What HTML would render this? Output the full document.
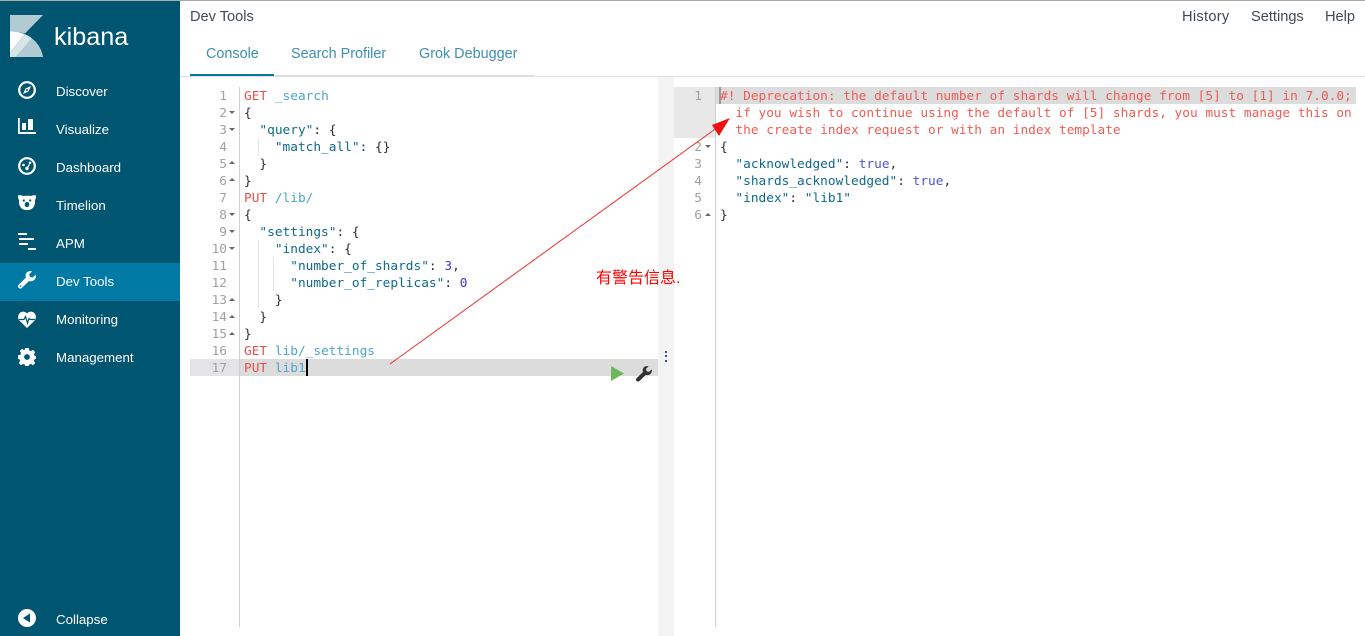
<!DOCTYPE html>
<html><head><meta charset="utf-8"><style>
*{box-sizing:border-box}
html,body{margin:0;padding:0;width:1365px;height:636px;overflow:hidden;background:#fff}
body{position:relative;font-family:"Liberation Sans",sans-serif}
.a{position:absolute;white-space:pre}
.nav{position:absolute;left:56px;color:#fff;font-size:13.3px;line-height:18px;white-space:pre}
.ic{position:absolute;left:18px;width:18px;height:18px;overflow:visible}
.h{position:absolute;font-size:14.6px;line-height:18px;color:#3f4a55;white-space:pre}
.t{position:absolute;font-size:14.4px;line-height:18px;color:#3d8fb0;white-space:pre;top:45px}
.ln{position:absolute;text-align:right;font:12.8px/17px "DejaVu Sans Mono",monospace;color:#a0a0a0;white-space:pre}
.c{position:absolute;font:12.8px/17px "DejaVu Sans Mono",monospace;white-space:pre;color:#2a2f35}
.m{color:#e8504a}.u{color:#4ba6cc}.s{color:#0f6a8a}.n{color:#3b3bd0}.b{color:#4a58d0}.w{color:#ee5d55}
.f{position:absolute;width:0;height:0;border-left:3px solid transparent;border-right:3px solid transparent}
.d{border-top:3px solid #666}.p{border-bottom:3px solid #666}
.g{position:absolute;width:1px;background:#e4e4e4}
</style></head><body>
<div class="a" style="left:0;top:0;width:1365px;height:1px;background:#aaa"></div>
<div class="a" style="left:0;top:1px;width:180px;height:635px;background:#005571"></div>
<div class="a" style="left:0;top:263px;width:180px;height:38px;background:#0079a5"></div>

<svg class="a" style="left:10px;top:15px" width="33" height="42" viewBox="0 0 33 42">
<path d="M0 0H33L15 18.500C10 17 5 16.500 0 16.500Z" fill="#b2cbd3"/>
<path d="M0 16.500C5 16.500 10 17 14.500 19L0 38Z" fill="#fff"/>
<path d="M14.500 19C17 20 20 21.500 22 23.500L6 42H0V38Z" fill="#d7e4e8"/>
<path d="M22 23.500C28 28 32 35 33 42H6Z" fill="#b2cbd3"/>
</svg>
<div class="a" style="left:54px;top:20px;font-size:25.200px;line-height:34px;color:#fff">kibana</div>

<svg class="ic" style="top:81px" viewBox="0 0 18 18"><circle cx="9" cy="9" r="7.800" fill="none" stroke="#fff" stroke-width="2.200"/><path d="M13 5 10.500 10.500 5 13 7.500 7.500Z" fill="#fff"/><circle cx="9" cy="9" r="1" fill="#005571"/></svg>
<div class="nav" style="top:83px">Discover</div>
<svg class="ic" style="top:118px" viewBox="0 0 18 18"><path d="M0 0H1.800V14H18V16H0Z" fill="#fff"/><rect x="4" y="5" width="4" height="7" fill="#fff"/><rect x="10" y="1" width="5" height="11" fill="#fff"/></svg>
<div class="nav" style="top:121px">Visualize</div>
<svg class="ic" style="top:157px" viewBox="0 0 18 18"><circle cx="9" cy="9" r="7.800" fill="none" stroke="#fff" stroke-width="2.200"/><circle cx="5.500" cy="8" r="1.300" fill="#fff"/><circle cx="12" cy="5.800" r="1.300" fill="#fff"/><circle cx="9" cy="11.500" r="1.700" fill="#fff"/><path d="M9 11 11.500 7.500" stroke="#fff" stroke-width="1.200"/></svg>
<div class="nav" style="top:159px">Dashboard</div>
<svg class="ic" style="top:195px" viewBox="0 0 18 18"><path d="M0 .5C2 0 4 .5 5 1 7 .6 11 .6 13 1 14 .5 16 0 18 .5 18.300 2.500 17.800 4 17 5 17.300 9 16.500 12 13.500 14 11 15.500 7 15.500 4.500 14 1.500 12 .7 9 1 5 .2 4-.3 2.500 0 .5Z" fill="#fff"/><circle cx="5.800" cy="5.500" r="1.100" fill="#005571"/><circle cx="12.200" cy="5.500" r="1.100" fill="#005571"/><ellipse cx="9" cy="9.500" rx="2.300" ry="2.600" fill="#005571"/></svg>
<div class="nav" style="top:197px">Timelion</div>
<svg class="ic" style="top:233px" viewBox="0 0 18 18"><rect x="0" y="0" width="9" height="2" fill="#fff"/><rect x="1" y="5" width="15" height="2" fill="#fff"/><rect x="1" y="10" width="9" height="2" fill="#fff"/><rect x="10" y="15" width="8" height="2" fill="#fff"/></svg>
<div class="nav" style="top:235px">APM</div>
<svg class="ic" style="top:271px" viewBox="0 0 18 18"><path d="M17.600 3.800 14.500 6.600 11.800 5.800 11.200 3.200 14.200.4C11.500-.5 8.600.5 7.800 3.200 7.400 4.500 7.500 5.600 7.900 6.700L.8 13.500C-.3 14.600-.2 16 .6 16.900 1.500 17.800 3 17.800 4 16.800L11.100 10C12.300 10.400 13.600 10.400 14.800 9.900 17.300 8.800 18.400 6.300 17.600 3.800Z" fill="#fff"/><circle cx="2.600" cy="15" r=".9" fill="#0079a5"/></svg>
<div class="nav" style="top:273px">Dev Tools</div>
<svg class="ic" style="top:311px" viewBox="0 0 18 18"><path d="M9 17 1.500 9.800C-.5 7.500-.3 4 1.700 2 3.800 0 7 .2 9 2.500 11 .2 14.200 0 16.300 2 18.300 4 18.500 7.500 16.500 9.800Z" fill="#fff"/><path d="M1 8.500H6L7.500 5.500 9.500 12 11 7.500 12 8.500H17" fill="none" stroke="#005571" stroke-width="1.200"/></svg>
<div class="nav" style="top:311px">Monitoring</div>
<svg class="ic" style="top:348px" viewBox="0 0 18 18"><path d="M7.300 0H10.700L11.200 2.400 12.900 3.100 15 1.800 17.200 4.100 15.900 6.200 16.600 7.800 18 8.200V10.800L16.600 11.200 15.900 12.900 17.200 15 15 17.200 12.900 15.900 11.200 16.600 10.700 18H7.300L6.800 16.600 5.100 15.900 3 17.200.800 15 2.100 12.900 1.400 11.200 0 10.800V7.300L2.400 6.800 3.100 5.100 1.800 3 4 .800 6.100 2.100 6.800 1.400Z" fill="#fff"/><circle cx="9" cy="9" r="2.900" fill="#005571"/></svg>
<div class="nav" style="top:349px">Management</div>
<svg class="ic" style="top:609px" viewBox="0 0 18 18"><circle cx="9" cy="9" r="9" fill="#fff"/><path d="M12 4.500V13.500L5 9Z" fill="#005571"/></svg>
<div class="nav" style="top:611px">Collapse</div>

<div class="h" style="left:190px;top:8px">Dev Tools</div>
<div class="h" style="left:1182px;top:8px;letter-spacing:.3px">History</div>
<div class="h" style="left:1251px;top:8px">Settings</div>
<div class="h" style="left:1325px;top:8px">Help</div>
<div class="t" style="left:206px">Console</div>
<div class="t" style="left:291px">Search Profiler</div>
<div class="t" style="left:419px">Grok Debugger</div>
<div class="a" style="left:190px;top:75px;width:344px;height:1px;background:#ddd"></div>
<div class="a" style="left:190px;top:74px;width:84px;height:2px;background:#0079a5"></div>
<div class="a" style="left:180px;top:76px;width:1185px;height:1px;background:#ddd"></div>

<!-- left editor -->
<div class="a" style="left:239px;top:87px;width:1px;height:540px;background:#d0d0d0"></div>
<div class="a" style="left:190px;top:359px;width:49px;height:17px;background:#e4e4e6"></div>
<div class="a" style="left:240px;top:359px;width:418px;height:17px;background:#dcdcdc"></div>
<div class="ln" style="left:190px;top:88px;width:37px">1
2
3
4
5
6
7
8
9
10
11
12
13
14
15
16
17</div>
<div class="f d" style="left:229px;top:111px"></div><div class="f d" style="left:229px;top:128px"></div>
<div class="f p" style="left:229px;top:161px"></div><div class="f p" style="left:229px;top:178px"></div>
<div class="f d" style="left:229px;top:213px"></div><div class="f d" style="left:229px;top:230px"></div><div class="f d" style="left:229px;top:247px"></div>
<div class="f p" style="left:229px;top:298px"></div><div class="f p" style="left:229px;top:315px"></div><div class="f p" style="left:229px;top:332px"></div>
<div class="g" style="left:258px;top:138px;height:17px"></div>
<div class="g" style="left:258px;top:240px;height:68px"></div>
<div class="g" style="left:273px;top:257px;height:34px"></div>
<div class="c" style="left:244px;top:88px"><span class="m">GET</span> <span class="u">_search</span>
{
  <span class="s">"query"</span>: {
    <span class="s">"match_all"</span>: {}
  }
}
<span class="m">PUT</span> <span class="u">/lib/</span>
{
  <span class="s">"settings"</span>: {
    <span class="s">"index"</span>: {
      <span class="s">"number_of_shards"</span>: <span class="n">3</span>,
      <span class="s">"number_of_replicas"</span>: <span class="n">0</span>
    }
  }
}
<span class="m">GET</span> <span class="u">lib/_settings</span>
<span class="m">PUT</span> <span class="u">lib1</span></div>
<div class="a" style="left:306px;top:359px;width:2px;height:17px;background:#000"></div>
<svg class="a" style="left:611px;top:366px" width="14" height="15" viewBox="0 0 14 15"><path d="M0 0 13 7.500 0 15Z" fill="#6cb85c"/></svg>
<svg class="a" style="left:636px;top:366px" width="16" height="16" viewBox="0 0 18 18"><path d="M17.600 3.800 14.500 6.600 11.800 5.800 11.200 3.200 14.200.4C11.500-.5 8.600.5 7.800 3.200 7.400 4.500 7.500 5.600 7.900 6.700L.8 13.500C-.3 14.600-.2 16 .6 16.900 1.500 17.800 3 17.800 4 16.800L11.100 10C12.300 10.400 13.600 10.400 14.800 9.900 17.300 8.800 18.400 6.300 17.600 3.800Z" fill="#333"/></svg>

<!-- divider -->
<div class="a" style="left:658px;top:77px;width:16px;height:559px;background:#f4f4f4"></div>
<div class="a" style="left:665px;top:351px;width:2px;height:2px;background:#334d99"></div>
<div class="a" style="left:665px;top:355px;width:2px;height:2px;background:#334d99"></div>
<div class="a" style="left:665px;top:360px;width:2px;height:2px;background:#334d99"></div>

<!-- right editor -->
<div class="a" style="left:715px;top:87px;width:1px;height:540px;background:#d0d0d0"></div>
<div class="a" style="left:674px;top:87px;width:41px;height:51px;background:#e8e8e8"></div>
<div class="a" style="left:716px;top:87px;width:640px;height:17px;background:#dcdcdc"></div>
<div class="a" style="left:719px;top:87px;width:2px;height:17px;background:#999"></div>
<div class="ln" style="left:674px;top:88px;width:28px">1


2
3
4
5
6</div>
<div class="f d" style="left:705px;top:145px"></div>
<div class="f p" style="left:705px;top:213px"></div>
<div class="c" style="left:720px;top:88px"><span class="w">#! Deprecation: the default number of shards will change from [5] to [1] in 7.0.0;
  if you wish to continue using the default of [5] shards, you must manage this on
  the create index request or with an index template</span>
{
  <span class="s">"acknowledged"</span>: <span class="b">true</span>,
  <span class="s">"shards_acknowledged"</span>: <span class="b">true</span>,
  <span class="s">"index"</span>: <span class="s">"lib1"</span>
}</div>

<!-- annotation -->
<div class="a" style="left:596px;top:269px;font:16px/19px 'Liberation Sans','WenQuanYi Zen Hei','Noto Sans CJK SC',sans-serif;color:#f00">有警告信息.</div>
<svg class="a" style="left:380px;top:110px" width="360" height="260" viewBox="0 0 360 260"><path d="M10 254 338 17" stroke="#f03030" stroke-width="1" fill="none"/><path d="M350 8 332 15 339 26Z" fill="#f01010"/></svg>
</body></html>
